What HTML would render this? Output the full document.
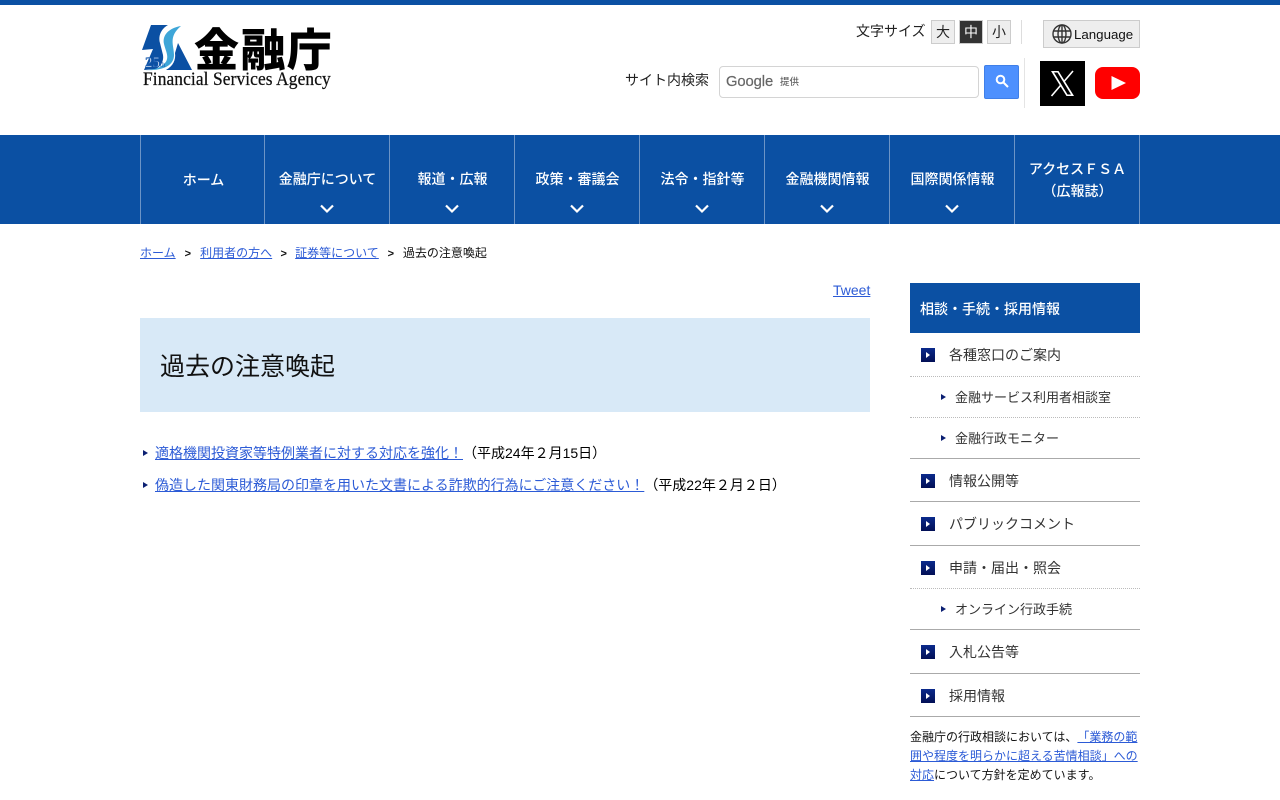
<!DOCTYPE html>
<html lang="ja"><head><meta charset="utf-8"><title>過去の注意喚起</title>
<style>
*{box-sizing:border-box}
html,body{margin:0;padding:0}
body{width:1280px;height:800px;overflow:hidden;position:relative;background:#fff;color:#000;font-family:"Liberation Sans","Noto Sans CJK JP",sans-serif;font-size:14px;text-spacing-trim:space-all}
a{color:#2c5bd6}
.abs{position:absolute;white-space:nowrap}
.fs{position:absolute;top:20px;width:24px;height:24px;border:1px solid #ccc;background:#eee;text-align:center;line-height:22px;font-size:14px;color:#222}
nav{position:absolute;left:0;top:135px;width:1280px;height:89px;background:#0b50a3}
nav div{position:absolute;top:0;height:89px;width:125px;border-left:1px solid #6c94c6;color:#fff;font-weight:500;font-size:14px;text-align:center;font-family:"Noto Sans CJK JP",sans-serif;}
nav span{position:absolute;left:1px;right:0;top:33px;line-height:22px;white-space:nowrap}
nav svg{position:absolute;left:55px;top:69px}
.m{position:absolute;left:910px;width:230px;border-bottom:1px solid #aaa;height:44px;font-size:14px;color:#333}
.m i{position:absolute;left:11px;top:15px;width:14px;height:14px;background:linear-gradient(#0b2a8c,#020f55)}
.m i:after{content:"";position:absolute;left:5px;top:4px;border-left:4px solid #fff;border-top:3px solid transparent;border-bottom:3px solid transparent}
.m b{position:absolute;left:39px;top:12px;font-weight:400;line-height:21px;white-space:nowrap}
.s{position:absolute;left:910px;width:230px;font-size:13px;color:#333}
.s:before,.li:before{content:"";position:absolute;border-left:5px solid #0b1f72;border-top:3.5px solid transparent;border-bottom:3.5px solid transparent}
.s:before{left:31px;top:17px}
.s b{position:absolute;left:45px;top:11px;font-weight:400;line-height:19px;white-space:nowrap}
.li{position:absolute;left:155px;white-space:nowrap;font-size:14px;line-height:20px}
.li:before{left:-12px;top:7px}
.bc span{display:inline-block;text-align:center;font-weight:700;font-size:11px}
</style></head><body>
<div style="position:absolute;left:0;top:0;width:1280px;height:5px;background:#0b50a3"></div>

<svg class="abs" style="left:142px;top:25px" width="52" height="46" viewBox="0 0 52 46">
<path d="M9 0H26C19 4 16 11 18 18L21 30C22 36 19 41 14 44L2 45L11 24L0 25Z" fill="#0b50a3"/>
<path d="M36 18L50 45H24C31 41 34 35 33 28Z" fill="#0b50a3"/>
<path d="M39 1C27 3 20 10 22 19C24 28 30 35 18 42C12 45 6 45 3 45C20 46 32 41 32 30C32 20 26 12 39 1Z" fill="#3ea6d8"/>
<text x="3" y="42" font-family="Liberation Serif" font-size="15" fill="#fff" stroke="#1a5cb0" stroke-width=".6">25</text>
<text x="18" y="42" font-family="Liberation Serif" font-size="7" fill="#1a5cb0">th</text>
</svg>
<div class="abs" style="left:194px;top:21px;font-size:45px;line-height:52px;font-weight:900;font-family:'Noto Sans CJK JP',sans-serif;letter-spacing:1.4px;color:#000">金融庁</div>
<div class="abs" style="left:143px;top:70px;font-size:18.5px;line-height:21px;font-family:'Liberation Serif',serif;color:#111;transform:scaleX(.94);transform-origin:0 0;letter-spacing:.1px;-webkit-text-stroke:.25px #111">Financial Services Agency</div>

<div class="abs" style="left:856px;top:21px;font-size:14px;line-height:20px;color:#222">文字サイズ</div>
<div class="fs" style="left:931px">大</div>
<div class="fs" style="left:959px;background:#333;color:#fff">中</div>
<div class="fs" style="left:987px">小</div>
<div class="abs" style="left:1021px;top:20px;width:1px;height:24px;background:#ddd"></div>
<div class="abs" style="left:1043px;top:20px;width:97px;height:28px;background:#eee;border:1px solid #ccc"></div>
<svg class="abs" style="left:1052px;top:24px" width="20" height="20" viewBox="0 0 20 20" fill="none" stroke="#333" stroke-width="1.4"><circle cx="10" cy="10" r="9"/><ellipse cx="10" cy="10" rx="4" ry="9"/><path d="M10 1V19M1.5 7H18.5M1.5 13H18.5"/></svg>
<div class="abs" style="left:1074px;top:26px;font-size:13.3px;line-height:18px;color:#111">Language</div>

<div class="abs" style="left:625px;top:70px;font-size:14px;line-height:20px;color:#222">サイト内検索</div>
<div class="abs" style="left:719px;top:66px;width:260px;height:32px;border:1px solid #d4d4d4;border-radius:4px;background:#fff"></div>
<div class="abs" style="left:726px;top:73px;font-size:14.8px;line-height:18px;color:#666;letter-spacing:-.1px;-webkit-text-stroke:.2px #666">Google</div>
<div class="abs" style="left:780px;top:76px;font-size:9.5px;line-height:14px;color:#444">提供</div>
<div class="abs" style="left:984px;top:65px;width:35px;height:34px;background:#4d90fe;border:1px solid #3f7fe8;border-radius:2px"></div>
<svg class="abs" style="left:995px;top:74px" width="14" height="14" viewBox="0 0 14 14" fill="none" stroke="#fff" stroke-width="2"><circle cx="5.5" cy="5.5" r="3.8"/><path d="M8.5 8.5L13 13"/></svg>
<div class="abs" style="left:1024px;top:58px;width:1px;height:50px;background:#e4e4e4"></div>
<svg class="abs" style="left:1040px;top:61px" width="45" height="45" viewBox="0 0 45 45"><rect width="45" height="45" fill="#000"/><path d="M11 10H18.5L34 35H26.5ZM14 11.5L27.5 33.5H31L17.5 11.5Z" fill="#fff" fill-rule="evenodd"/><path d="M33 10L24 20.5M20.5 24.5L11.5 35" stroke="#fff" stroke-width="1.6"/></svg>
<svg class="abs" style="left:1095px;top:67px" width="45" height="32" viewBox="0 0 45 32"><rect width="45" height="32" rx="8" fill="#f00"/><path d="M16.5 9L31 16L16.5 23Z" fill="#fff"/></svg>

<nav>
<div style="left:140px"><span style="top:34px">ホーム</span></div>
<div style="left:264px"><span>金融庁について</span><svg width="14" height="10" viewBox="0 0 14 10" fill="none" stroke="#fff" stroke-width="2.2"><path d="M1 1.5L7 7.5L13 1.5"/></svg></div>
<div style="left:389px"><span>報道・広報</span><svg width="14" height="10" viewBox="0 0 14 10" fill="none" stroke="#fff" stroke-width="2.2"><path d="M1 1.5L7 7.5L13 1.5"/></svg></div>
<div style="left:514px"><span>政策・審議会</span><svg width="14" height="10" viewBox="0 0 14 10" fill="none" stroke="#fff" stroke-width="2.2"><path d="M1 1.5L7 7.5L13 1.5"/></svg></div>
<div style="left:639px"><span>法令・指針等</span><svg width="14" height="10" viewBox="0 0 14 10" fill="none" stroke="#fff" stroke-width="2.2"><path d="M1 1.5L7 7.5L13 1.5"/></svg></div>
<div style="left:764px"><span>金融機関情報</span><svg width="14" height="10" viewBox="0 0 14 10" fill="none" stroke="#fff" stroke-width="2.2"><path d="M1 1.5L7 7.5L13 1.5"/></svg></div>
<div style="left:889px"><span>国際関係情報</span><svg width="14" height="10" viewBox="0 0 14 10" fill="none" stroke="#fff" stroke-width="2.2"><path d="M1 1.5L7 7.5L13 1.5"/></svg></div>
<div style="left:1014px;width:126px;border-right:1px solid #6c94c6"><span style="top:23px">アクセスＦＳＡ<br>（広報誌）</span></div>
</nav>

<div class="abs bc" style="left:140px;top:244px;font-size:12px;line-height:18px;color:#111"><a href="#">ホーム</a><span style="width:24.5px">&gt;</span><a href="#">利用者の方へ</a><span style="width:23px">&gt;</span><a href="#">証券等について</a><span style="width:24px">&gt;</span>過去の注意喚起</div>

<a href="#" class="abs" style="left:833px;top:281px;font-size:14px;line-height:18px">Tweet</a>
<div class="abs" style="left:140px;top:318px;width:730px;height:94px;background:#d8e9f7"></div>
<div class="abs" style="left:160px;top:350px;font-size:25px;line-height:35px;color:#111">過去の注意喚起</div>

<div class="li" style="top:443px"><a href="#">適格機関投資家等特例業者に対する対応を強化！</a>（平成24年２月15日）</div>
<div class="li" style="top:475px"><a href="#">偽造した関東財務局の印章を用いた文書による詐欺的行為にご注意ください！</a>（平成22年２月２日）</div>

<div class="abs" style="left:910px;top:283px;width:230px;height:50px;background:#0b50a3;color:#fff;font-weight:500;font-size:14px;line-height:52px;padding-left:10px;font-family:'Noto Sans CJK JP',sans-serif">相談・手続・採用情報</div>
<div class="m" style="top:333px;border-bottom:1px dotted #bbb"><i></i><b>各種窓口のご案内</b></div>
<div class="s" style="top:377px;height:41px;border-bottom:1px dotted #bbb"><b>金融サービス利用者相談室</b></div>
<div class="s" style="top:418px;height:41px;border-bottom:1px solid #aaa"><b>金融行政モニター</b></div>
<div class="m" style="top:459px;height:43px"><i></i><b>情報公開等</b></div>
<div class="m" style="top:502px"><i></i><b>パブリックコメント</b></div>
<div class="m" style="top:546px;height:43px;border-bottom:1px dotted #bbb"><i></i><b>申請・届出・照会</b></div>
<div class="s" style="top:589px;height:41px;border-bottom:1px solid #aaa"><b>オンライン行政手続</b></div>
<div class="m" style="top:630px"><i></i><b>入札公告等</b></div>
<div class="m" style="top:674px;height:43px"><i></i><b>採用情報</b></div>
<div class="abs" style="left:910px;top:728px;width:230px;font-size:12px;line-height:19px;color:#111;white-space:normal">金融庁の行政相談においては、<a href="#">「業務の範囲や程度を明らかに超える苦情相談」への対応</a>について方針を定めています。</div>
</body></html>
